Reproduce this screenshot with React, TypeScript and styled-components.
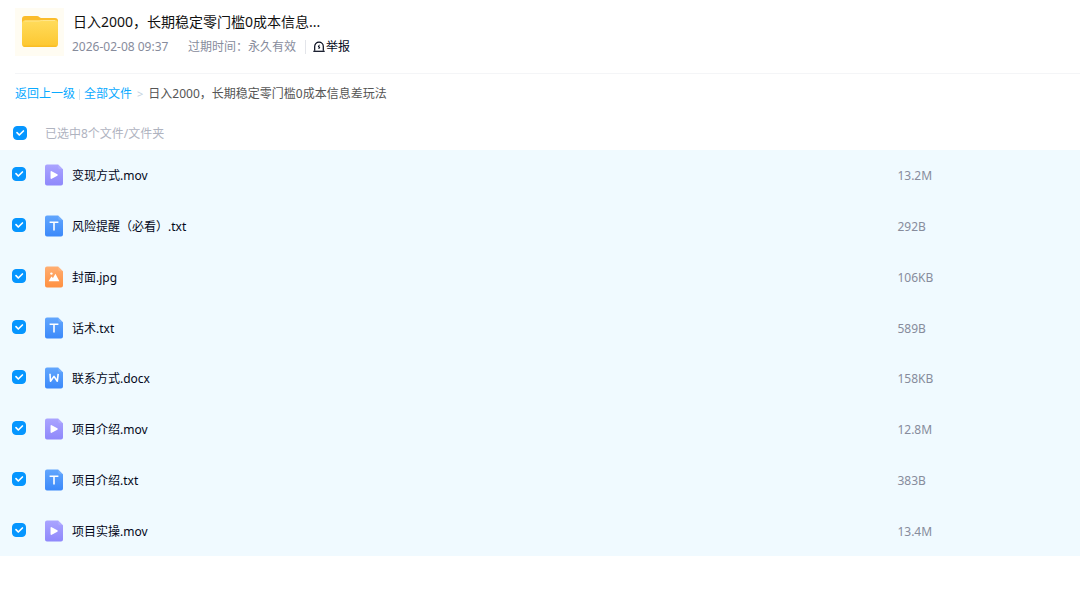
import React, { useState } from 'react';
import styled, { createGlobalStyle } from 'styled-components';

const GlobalStyle = createGlobalStyle`
  * { box-sizing: border-box; }
  body {
    margin: 0;
    background: #fff;
    color: #03081a;
    font-family: "Noto Sans", "Noto Sans CJK SC", sans-serif;
    font-size: 12px;
    line-height: 18px;
  }
`;

const Header = styled.header`
  display: flex;
  align-items: flex-start;
  gap: 8px;
  height: 74px;
  margin-left: 15px;
  padding-top: 8px;
  border-bottom: 1px solid #f4f5f7;
`;

const FolderBox = styled.div`
  display: flex;
  flex: none;
  width: 49px;
  height: 48px;
  background: #fffcf2;
`;

const HeaderText = styled.div`
  display: flex;
  flex-direction: column;
  gap: 6px;
  padding-top: 4px;
`;

const Title = styled.h1`
  margin: 0;
  padding-left: 1px;
  font-size: 14px;
  font-weight: 400;
  line-height: 20px;
  color: #111;
`;

const Meta = styled.div`
  display: flex;
  align-items: center;
  color: #878c9c;
`;

const DateText = styled.time`
  width: 116px;
`;

const ReportButton = styled.button`
  display: flex;
  align-items: center;
  gap: 1px;
  height: 14px;
  margin-left: 9px;
  padding: 0 0 0 7px;
  border: 0;
  border-left: 1px solid #e3e5ea;
  background: none;
  color: #03081a;
  font: inherit;
  cursor: pointer;
`;

const Breadcrumb = styled.nav`
  display: flex;
  align-items: center;
  gap: 5px;
  padding: 11px 15px 0;
  color: #555;
`;

const CrumbLink = styled.a`
  color: #09aaff;
  text-decoration: none;
`;

const Divider = styled.span`
  width: 1px;
  height: 11px;
  margin: 0 -1px;
  background: #d3e3ef;
`;

const Separator = styled.span`
  font-size: 11px;
  color: #c4d3e0;
`;

const SelectBar = styled.label`
  display: flex;
  align-items: center;
  gap: 18px;
  height: 47px;
  padding: 15px 13px 0;
  color: #afb3bf;
`;

const CheckBox = styled.span`
  display: grid;
  flex: none;
  width: 14px;
  height: 14px;

  ${SelectBar} & { margin-bottom: 2px; }
  > * { grid-area: 1 / 1; }
  > svg { pointer-events: none; z-index: 1; }
`;

const CheckInput = styled.input`
  appearance: none;
  width: 14px;
  height: 14px;
  margin: 0;
  border: 1px solid #c4c9d4;
  border-radius: 4px;
  background: #fff;
  cursor: pointer;

  &:checked {
    border-color: #0696ff;
    background: #0696ff;
  }
`;

const FileTable = styled.table`
  width: 100%;
  height: 406px;
  table-layout: fixed;
  border-collapse: collapse;
  background: #f0faff;
`;

const Cell = styled.td<{ $width?: string }>`
  width: ${({ $width }) => $width ?? 'auto'};
  padding: 2px 0 0;
  vertical-align: middle;
  color: #878c9c;
`;

const CheckCell = styled(Cell)`
  padding: 0 0 2px 12px;
`;

const SizeCell = styled(Cell)`
  padding-left: 1px;
`;

const FileLabel = styled.label`
  display: flex;
  align-items: center;
  gap: 9px;
  color: #03081a;
`;

type Kind = 'video' | 'text' | 'image' | 'word';

const files: { name: string; size: string; kind: Kind }[] = [
  { name: '变现方式.mov', size: '13.2M', kind: 'video' },
  { name: '风险提醒（必看）.txt', size: '292B', kind: 'text' },
  { name: '封面.jpg', size: '106KB', kind: 'image' },
  { name: '话术.txt', size: '589B', kind: 'text' },
  { name: '联系方式.docx', size: '158KB', kind: 'word' },
  { name: '项目介绍.mov', size: '12.8M', kind: 'video' },
  { name: '项目介绍.txt', size: '383B', kind: 'text' },
  { name: '项目实操.mov', size: '13.4M', kind: 'video' },
];

const gradients: Record<Kind, [string, string]> = {
  video: ['#aaa4ff', '#8f88fb'],
  text: ['#62a6fd', '#3b89fa'],
  image: ['#ffae72', '#ff9040'],
  word: ['#62a6fd', '#3b89fa'],
};

function FileIcon({ kind, id }: { kind: Kind; id: string }) {
  const [top, bottom] = gradients[kind];
  return (
    <svg width="18" height="24" viewBox="0 0 18 24" aria-hidden="true">
      <defs>
        <linearGradient id={id} x1="0" y1="0" x2="0" y2="1">
          <stop offset="0" stopColor={top} />
          <stop offset="1" stopColor={bottom} />
        </linearGradient>
      </defs>
      <path
        d="M2.5 0.5H13.2L18 5.2V19.5A2 2 0 0 1 16 21.5H2A2 2 0 0 1 0 19.5V2.5A2 2 0 0 1 2 0.5Z"
        fill={`url(#${id})`}
      />
      <path d="M13.2 0.5L18 5.2H14.8A1.6 1.6 0 0 1 13.2 3.6Z" fill="#fff" opacity="0.12" />
      {kind === 'video' && (
        <path d="M6.3 7.8L12 11L6.3 14.2Z" fill="#fff" stroke="#fff" strokeWidth="1.5" strokeLinejoin="round" />
      )}
      {kind === 'text' && <path d="M4.6 7.3H13.4M9 7.3V15.5" fill="none" stroke="#fff" strokeWidth="1.6" />}
      {kind === 'word' && (
        <path
          d="M5 6.8L5.5 14.2L9 9.4L12.3 14.2L13.2 6.8"
          fill="none"
          stroke="#fff"
          strokeWidth="1.6"
          strokeLinejoin="round"
        />
      )}
      {kind === 'image' && (
        <g fill="#fff">
          <circle cx="6.4" cy="7.6" r="1.2" />
          <path d="M3.6 15.2L6.4 10.6L8 12L10.4 7.8L14.4 15.2Z" />
        </g>
      )}
    </svg>
  );
}

function FolderIcon() {
  return (
    <svg width="49" height="48" viewBox="0 0 49 48" aria-hidden="true">
      <defs>
        <linearGradient id="folder-front" x1="0" y1="0" x2="0" y2="1">
          <stop offset="0" stopColor="#ffdc5c" />
          <stop offset="1" stopColor="#fdc730" />
        </linearGradient>
      </defs>
      <path d="M7 11A3 3 0 0 1 10 8H22C24 8 24.500 10 26.500 10H40A3 3 0 0 1 43 13V22H7Z" fill="#fbbc2a" />
      <path
        d="M7 15.500A3 3 0 0 1 10 12.500H23C25 12.500 25.500 12 27.500 12H40A3 3 0 0 1 43 15V36A3 3 0 0 1 40 39H10A3 3 0 0 1 7 36Z"
        fill="url(#folder-front)"
      />
      <path d="M9.500 13H23C25 13 25.500 12.500 27.500 12.500H40" fill="none" stroke="#ffe68c" />
      <path d="M8 37.500Q8.500 39 10 39H40Q41.500 39 42 37.500Z" fill="#f9bd25" />
    </svg>
  );
}

function AlarmIcon() {
  return (
    <svg width="12" height="12" viewBox="0 0 12 12" fill="none" stroke="#03081a" aria-hidden="true">
      <path d="M1.7 9.8V5.4A4.3 4.3 0 0 1 10.3 5.4V9.8" strokeWidth="1.2" />
      <path d="M0.3 10.3H11.7" strokeWidth="1.2" />
      <path d="M6.4 3.8L5.2 6H6.9L5.7 8" strokeWidth="1" />
    </svg>
  );
}

function Check(props: { id: string; checked: boolean; label?: string; onToggle: () => void }) {
  return (
    <CheckBox>
      <CheckInput
        type="checkbox"
        id={props.id}
        checked={props.checked}
        aria-label={props.label}
        onChange={props.onToggle}
      />
      <svg width="14" height="14" viewBox="0 0 14 14" fill="none" aria-hidden="true">
        <path
          d="M4 6.7L6.3 9L10.4 5"
          stroke="#fff"
          strokeWidth="1.7"
          strokeLinecap="round"
          strokeLinejoin="round"
        />
      </svg>
    </CheckBox>
  );
}

export default function App() {
  const [selected, setSelected] = useState<boolean[]>(files.map(() => true));
  const count = selected.filter(Boolean).length;
  const all = count === files.length;

  return (
    <>
      <GlobalStyle />
      <Header>
        <FolderBox>
          <FolderIcon />
        </FolderBox>
        <HeaderText>
          <Title>日入2000，长期稳定零门槛0成本信息...</Title>
          <Meta>
            <DateText>2026-02-08 09:37</DateText>
            <span>过期时间：永久有效</span>
            <ReportButton type="button">
              <AlarmIcon />
              举报
            </ReportButton>
          </Meta>
        </HeaderText>
      </Header>
      <main>
        <Breadcrumb>
          <CrumbLink href="#up">返回上一级</CrumbLink>
          <Divider />
          <CrumbLink href="#all">全部文件</CrumbLink>
          <Separator>&gt;</Separator>
          <span>日入2000，长期稳定零门槛0成本信息差玩法</span>
        </Breadcrumb>
        <SelectBar htmlFor="select-all">
          <Check id="select-all" checked={all} onToggle={() => setSelected(files.map(() => !all))} />
          <span>{`已选中${count}个文件/文件夹`}</span>
        </SelectBar>
        <FileTable>
          <tbody>
            {files.map((file, i) => (
              <tr key={file.name}>
                <CheckCell $width="45px">
                  <Check
                    id={`file-${i}`}
                    checked={selected[i]}
                    onToggle={() => setSelected(selected.map((on, n) => (n === i ? !on : on)))}
                  />
                </CheckCell>
                <Cell>
                  <FileLabel htmlFor={`file-${i}`}>
                    <FileIcon kind={file.kind} id={`icon-${i}`} />
                    <span>{file.name}</span>
                  </FileLabel>
                </Cell>
                <SizeCell $width="17%">{file.size}</SizeCell>
              </tr>
            ))}
          </tbody>
        </FileTable>
      </main>
    </>
  );
}
